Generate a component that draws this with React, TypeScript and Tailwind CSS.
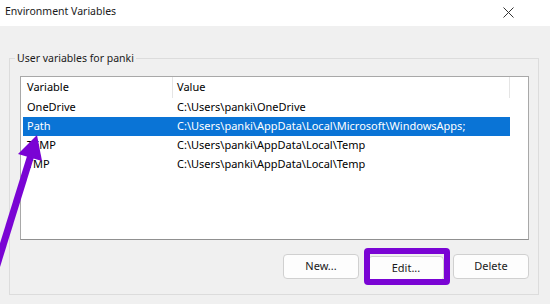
const rows = [
  { name: 'OneDrive', value: 'C:\\Users\\panki\\OneDrive' },
  { name: 'Path', value: 'C:\\Users\\panki\\AppData\\Local\\Microsoft\\WindowsApps;', selected: true },
  { name: 'TEMP', value: 'C:\\Users\\panki\\AppData\\Local\\Temp' },
  { name: 'TMP', value: 'C:\\Users\\panki\\AppData\\Local\\Temp' },
];

function WinButton({ label }: { label: string }) {
  return (
    <button className="h-[25px] w-[76px] rounded-[4px] border border-[#d0d0d0] bg-[#fdfdfd] text-[11px] text-[#1a1a1a]">
      {label}
    </button>
  );
}

export default function App() {
  return (
    <div
      className="relative h-[304px] w-[550px] overflow-hidden bg-[#f0f0f0] text-black"
      style={{ fontFamily: '"Noto Sans", "Open Sans", sans-serif' }}
    >
      {/* title bar */}
      <div className="flex h-[26px] items-center justify-between bg-white pb-[2px] pl-[5px] pr-[36px]">
        <span className="text-[10.5px] text-[#1a1a1a]">Environment Variables</span>
        <svg width="11" height="11" viewBox="0 0 11 11">
          <path d="M0.5 0.5L10.5 10.5M10.5 0.5L0.5 10.5" stroke="#333" strokeWidth="1" />
        </svg>
      </div>

      {/* group box */}
      <div className="relative ml-[9px] mt-[32px] w-[530px] border border-[#dcdcdc] pb-[13px] pl-[10px] pr-[9px] pt-[17px]">
        <span className="absolute -top-[10px] left-[5px] bg-[#f0f0f0] px-[2px] text-[10.5px] leading-[18px] text-[#1a1a1a]">
          User variables for panki
        </span>

        <div className="h-[164px] w-[509px] border border-[#a8a8a8] border-b-[#909090] bg-white pl-[2px] pt-0">
          <div className="flex h-[21px] w-[487px] items-center text-[11px]">
            <div className="flex h-full w-[150px] items-center border-r border-[#e5e5e5] pl-[4px]">Variable</div>
            <div className="flex h-full flex-1 items-center border-r border-[#e5e5e5] pl-[4px]">Value</div>
          </div>
          {rows.map((r) => (
            <div
              key={r.name}
              className={`flex h-[19px] w-[487px] items-center text-[11px] ${r.selected ? 'bg-[#0a74d6] text-white' : ''}`}
            >
              <div className="w-[150px] pl-[4px]">{r.name}</div>
              <div className="flex-1 whitespace-nowrap pl-[4px]">{r.value}</div>
            </div>
          ))}
        </div>

        <div className="mt-[14px] flex justify-end gap-[9px]">
          <WinButton label="New..." />
          <div className="relative">
            <WinButton label="Edit..." />
            <div className="pointer-events-none absolute -bottom-[4px] -left-[4px] -right-[6px] -top-[6px] rounded-[4px] border-[6px] border-[#7a04d4]" />
          </div>
          <WinButton label="Delete" />
        </div>
      </div>

      {/* purple arrow annotation */}
      <svg className="pointer-events-none absolute left-0 top-0" width="550" height="304">
        <line x1="-4" y1="268" x2="31" y2="155" stroke="#7a04d4" strokeWidth="7" />
        <polygon points="37,135 42,161 18,154" fill="#7a04d4" />
      </svg>
    </div>
  );
}
